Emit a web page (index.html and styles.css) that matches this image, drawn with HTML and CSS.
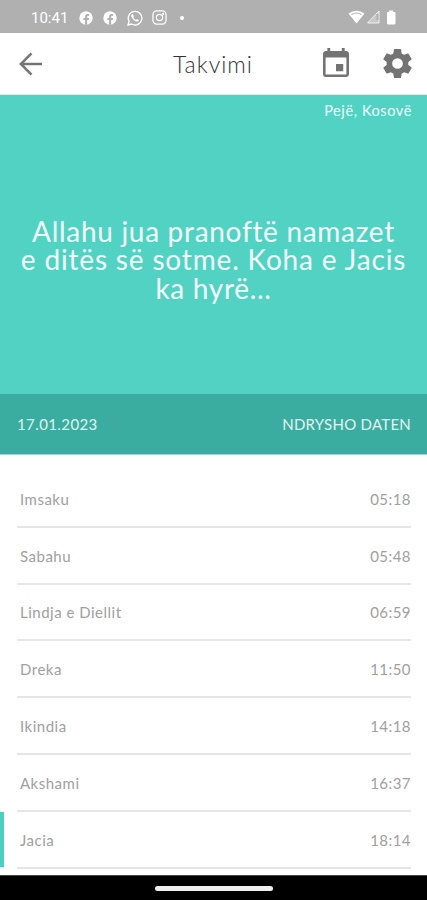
FILE: index.html
```html
<!DOCTYPE html>
<html lang="sq">
<head>
<meta charset="utf-8">
<meta name="viewport" content="width=device-width, initial-scale=1">
<title>Takvimi</title>
<link rel="stylesheet" href="styles.css">
</head>
<body>
<div class="screen">
  <div class="status">
    <span class="clock">10:41</span>
    <svg class="app" viewBox="0 0 24 24"><circle cx="12" cy="12" r="11.5" fill="#fff"/><path d="M10.5 23.5v-8H7.6v-3.4h2.9V9.8c0-3 1.8-4.6 4.4-4.6.9 0 1.9.1 2.4.2v3h-1.5c-1.4 0-1.8.8-1.8 1.7v2h3.2l-.6 3.4H14v8z" fill="#b0b0b0"/></svg>
    <svg class="app" viewBox="0 0 24 24"><circle cx="12" cy="12" r="11.5" fill="#fff"/><path d="M10.5 23.5v-8H7.6v-3.4h2.9V9.8c0-3 1.8-4.6 4.4-4.6.9 0 1.9.1 2.4.2v3h-1.5c-1.4 0-1.8.8-1.8 1.7v2h3.2l-.6 3.4H14v8z" fill="#b0b0b0"/></svg>
    <svg class="app whatsapp" viewBox="0 0 24 24"><path d="M1.5 22.5l1.6-5.6A10.2 10.2 0 1 1 7 21z" fill="none" stroke="#fff" stroke-width="2"/><path d="M8.7 6.3c-.5-.7-2.300 .6-2.300 2.300 0 3.500 5.200 8.700 8.700 8.700 1.900 0 3-1.600 2.400-2.300l-2.700-1.500-1.500 1.400c-1.600-.6-3.100-2-3.800-3.700l1-1.400z" fill="#fff"/></svg>
    <svg class="app instagram" viewBox="0 0 24 24" fill="none" stroke="#fff" stroke-width="2"><rect x="1.500" y="1.500" width="21" height="21" rx="6"/><circle cx="12" cy="12" r="5"/><circle cx="17.800" cy="6.200" r=".8"/></svg>
    <span class="more"></span>
    <svg class="signals" viewBox="0 0 50 18"><path d="M.5 4.500Q8.500-1 16.500 4.500L8.500 14.500z" fill="#fff"/><path d="M3.500 5.500Q8.500 2.500 13.500 5.500" fill="none" stroke="#b0b0b0" stroke-width="1.200"/><path d="M19.500 14L31 2v12z" fill="#c8c8c8" stroke="#f0f0f0"/><path d="M29.500 5v6" stroke="#b0b0b0" stroke-width="2"/><path d="M41 1.500h4V3h1.500q1 0 1 1v10q0 1.500-1.500 1.500h-5.500Q39 15.500 39 14V4q0-1 1-1h1z" fill="#fff"/></svg>
  </div>
  <header class="bar">
    <svg class="back" viewBox="0 0 24 24" fill="none" stroke="#757575" stroke-width="2.500"><path d="M23 12H2M12.500 1.300L1.800 12l10.700 10.700"/></svg>
    <h1 class="title">Takvimi</h1>
    <svg class="calendar" viewBox="3 1 18 20" preserveAspectRatio="none" fill="#737373"><path d="M17 12h-5v5h5v-5zM16 1v2H8V1H6v2H5c-1.110 0-1.990.9-1.990 2L3 19a2 2 0 0 0 2 2h14c1.100 0 2-.9 2-2V5c0-1.100-.9-2-2-2h-1V1h-2zm3.200 18.200H4.800V7.500h14.400v11.700z"/></svg>
    <svg class="gear" viewBox="2 2 20 20" fill="#737373"><path d="M19.430 12.980c.04-.32.07-.64.07-.98s-.03-.66-.07-.98l2.110-1.650c.19-.15.24-.42.12-.64l-2-3.460c-.12-.22-.39-.3-.61-.22l-2.490 1c-.52-.4-1.080-.73-1.690-.98l-.38-2.650A.488.488 0 0 0 14 2h-4c-.25 0-.46.18-.49.42l-.38 2.650c-.61.25-1.170.59-1.690.98l-2.490-1c-.23-.09-.49 0-.61.22l-2 3.460c-.13.22-.07.49.12.64l2.110 1.650c-.04.32-.07.65-.07.98s.03.66.07.98l-2.110 1.650c-.19.15-.24.42-.12.64l2 3.460c.12.22.39.3.61.22l2.490-1c.52.4 1.080.73 1.690.98l.38 2.650c.03.24.24.42.49.42h4c.25 0 .46-.18.49-.42l.38-2.650c.61-.25 1.170-.59 1.690-.98l2.490 1c.23.09.49 0 .61-.22l2-3.460c.12-.22.07-.49-.12-.64l-2.110-1.650zM12 15.700A3.700 3.700 0 1 1 12 8.300a3.700 3.700 0 0 1 0 7.400z"/></svg>
  </header>
  <section class="hero">
    <div class="place">Pejë, Kosovë</div>
    <div class="message">
      <div class="line">Allahu jua pranoftë namazet</div>
      <div class="line wide">e ditës së sotme. Koha e Jacis</div>
      <div class="line">ka hyrë...</div>
    </div>
  </section>
  <div class="datebar"><span class="date">17.01.2023</span><span class="change">NDRYSHO DATEN</span></div>
  <main class="times">
    <div class="row"><span>Imsaku</span><span class="time">05:18</span></div>
    <div class="row"><span>Sabahu</span><span class="time">05:48</span></div>
    <div class="row"><span>Lindja e Diellit</span><span class="time">06:59</span></div>
    <div class="row"><span>Dreka</span><span class="time">11:50</span></div>
    <div class="row"><span>Ikindia</span><span class="time">14:18</span></div>
    <div class="row"><span>Akshami</span><span class="time">16:37</span></div>
    <div class="row current"><span>Jacia</span><span class="time">18:14</span></div>
  </main>
  <div class="nav"><span class="handle"></span></div>
</div>
</body>
</html>
```
FILE: styles.css
```css
* { box-sizing: border-box; }
body { margin: 0; background: #fff; font-family: Lato, "Liberation Sans", sans-serif; }
svg { display: block; flex: none; }
.screen { width: 427px; height: 900px; overflow: hidden; display: flex; flex-direction: column; }
.screen > * { flex: none; }

.status { height: 33px; background: #b0b0b0; display: flex; align-items: center; padding: 2px 29px 0 31px; color: #fff; }
.clock { font: 400 15px/18px Roboto, sans-serif; width: 48px; }
.app { width: 14px; height: 14px; margin-right: 10px; }
.whatsapp { width: 16px; height: 16px; margin-right: 9px; }
.instagram { width: 15px; height: 15px; margin-right: 13px; }
.more { width: 4px; height: 4px; border-radius: 50%; background: #fff; }
.signals { width: 50px; height: 18px; margin-left: auto; }

.bar { height: 62px; background: #fff; border-bottom: 1px solid #d5eeea; display: flex; align-items: center; padding: 0 15px 0 19px; }
.back { width: 24px; height: 24px; }
.title { margin: 0 0 0 130px; width: 150px; font-size: 23px; line-height: 30px; font-weight: 300; color: #333; letter-spacing: 1px; }
.calendar { width: 26px; height: 29px; margin-top: -3px; }
.gear { width: 29px; height: 29px; margin-left: auto; }

.hero { height: 299px; background: #51d2c2; color: #f4fffd; }
.place { padding: 7px 15px 0 0; text-align: right; font-size: 14.500px; line-height: 18px; letter-spacing: .6px; }
.message { padding-top: 97px; text-align: center; font-size: 28px; letter-spacing: .7px; white-space: nowrap; }
.line { height: 28.400px; line-height: 28.400px; }
.wide { letter-spacing: .83px; }

.datebar { height: 61px; background: #3bada0; border-bottom: 1px solid #a0d6cf; color: #e0f4f2; display: flex; align-items: center; justify-content: space-between; padding: 0 16px 0 17px; font-size: 15px; line-height: 20px; }
.date { letter-spacing: .4px; }
.change { letter-spacing: .25px; }

.times { height: 420px; padding: 16px 16px 0 17px; }
.row { position: relative; height: 56.800px; border-bottom: 2px solid #e6e6e6; display: flex; align-items: center; justify-content: space-between; padding: 1px 0 0 3px; font-size: 15px; line-height: 20px; color: #a0a0a0; letter-spacing: .5px; }
.time { letter-spacing: .45px; }
.current::before { content: ""; position: absolute; left: -17px; top: 0; width: 4px; height: 55px; background: #4dcfc0; }

.nav { height: 25px; background: #000; border-top: 1px solid #444; display: flex; justify-content: center; padding-top: 10px; }
.handle { width: 118px; height: 5px; border-radius: 3px; background: #eee; }
```
